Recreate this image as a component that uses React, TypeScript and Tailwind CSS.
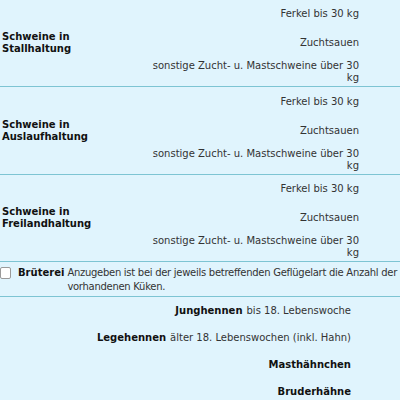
const sections = [
  { title: ['Schweine in', 'Stallhaltung'], h: 'h-[87px]' },
  { title: ['Schweine in', 'Auslaufhaltung'], h: 'h-[88px]' },
  { title: ['Schweine in', 'Freilandhaltung'], h: 'h-[87px]' },
];

const poultry = [
  { name: 'Junghennen', desc: 'bis 18. Lebenswoche' },
  { name: 'Legehennen', desc: 'älter 18. Lebenswochen (inkl. Hahn)' },
  { name: 'Masthähnchen', desc: '' },
  { name: 'Bruderhähne', desc: '' },
];

function PigSection({ title, h }: { title: string[]; h: string }) {
  return (
    <div className={`flex ${h} border-b border-[#7dc4d3]`}>
      <div className="w-[143px] shrink-0 flex items-center pl-[2px] font-bold text-[#111] leading-[12px]">
        <div>
          {title[0]}
          <br />
          {title[1]}
        </div>
      </div>
      <div className="w-[216px] shrink-0 flex flex-col text-[#333] leading-[12px] text-right">
        <div className="flex-1 flex items-center justify-end">Ferkel bis 30 kg</div>
        <div className="flex-1 flex items-center justify-end">Zuchtsauen</div>
        <div className="flex-1 flex items-center justify-end">sonstige Zucht- u. Mastschweine über 30 kg</div>
      </div>
      <div className="flex-1" />
    </div>
  );
}

export default function App() {
  return (
    <div
      className="w-[400px] h-[400px] overflow-hidden bg-[#e0f4fd] text-[10px]"
      style={{ fontFamily: '"DejaVu Sans", Verdana, sans-serif' }}
    >
      {sections.map((s, i) => (
        <PigSection key={i} title={s.title} h={s.h} />
      ))}

      {/* Brüterei */}
      <div className="flex items-start pt-[4px] pb-[2px] border-b border-[#7dc4d3] leading-[14px]">
        <span className="mt-[1px] w-[11px] h-[12px] shrink-0 bg-white border border-[#9a9a9a] rounded-[2px]" />
        <span className="ml-[7px] font-bold text-[#111] shrink-0">Brüterei</span>
        <span className="ml-[3px] text-[#333] tracking-[-0.28px]">
          Anzugeben ist bei der jeweils betreffenden Geflügelart die Anzahl der vorhandenen Küken.
        </span>
      </div>

      <div className="flex flex-col pr-[49px]">
        {poultry.map((p) => (
          <div key={p.name} className="h-[27px] flex items-center justify-end text-[#333]">
            <span className="font-bold text-[#111]">{p.name}</span>
            {p.desc && <span className="ml-[4px]">{p.desc}</span>}
          </div>
        ))}
      </div>
    </div>
  );
}
